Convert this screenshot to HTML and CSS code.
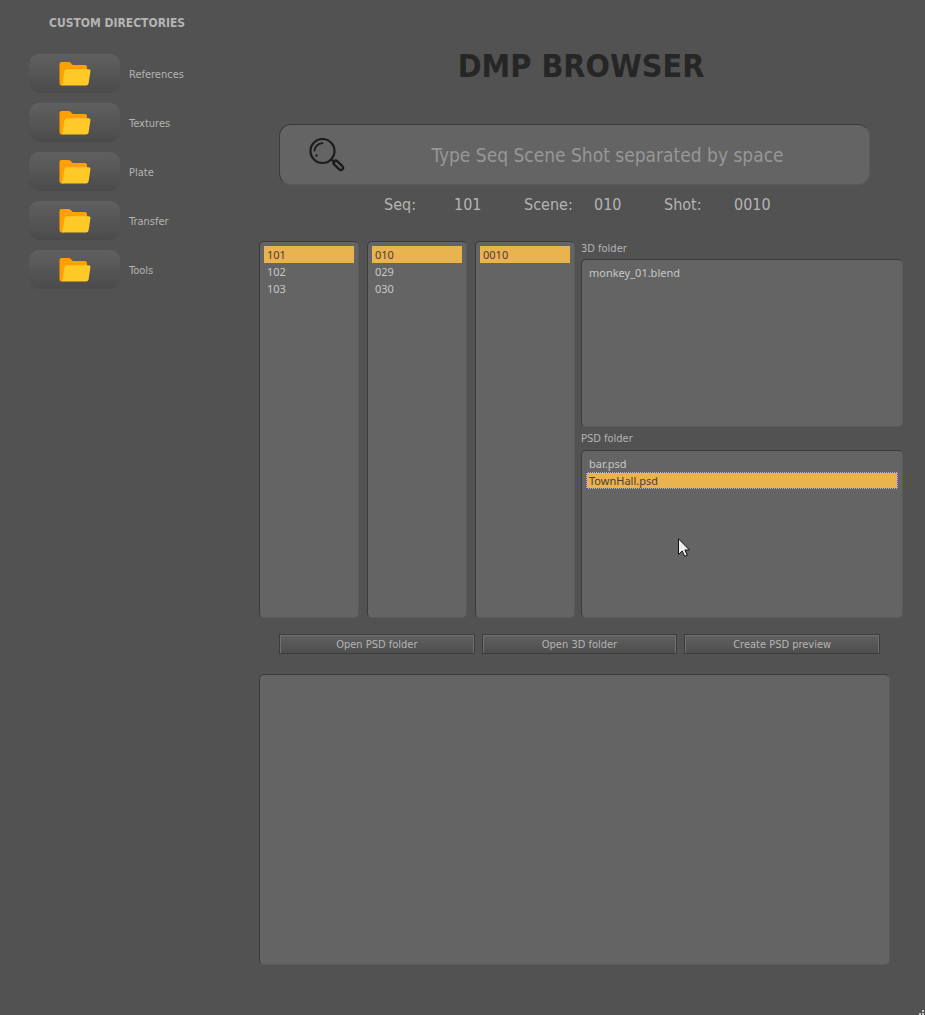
FILE: index.html
```html
<!DOCTYPE html>
<html lang="en">
<head>
<meta charset="utf-8">
<title>DMP Browser</title>
<link rel="stylesheet" href="styles.css">
</head>
<body>
<svg class="defs" aria-hidden="true">
  <symbol id="folder" viewBox="0 0 32 24">
    <path fill="#ffa000" d="M2.500 0H9.500Q11 0 12 1.200L13.800 3H26Q28 3 28 5V9L4 23.500H2.500Q0.500 23.500 0.500 21.500V2Q0.500 0 2.500 0Z"/>
    <path fill="#ffca28" d="M8 7.200H29.500Q31.800 7.200 31.400 9.500L29.600 21.500Q29.200 23.600 27 23.600H3.200L5.500 9.200Q6 7.200 8 7.200Z"/>
  </symbol>
</svg>
<div class="window">
  <aside class="sidebar">
    <h2 class="sidebar-title">CUSTOM DIRECTORIES</h2>
    <div class="directory"><button class="folder-button" id="d1" aria-labelledby="l1"><svg class="folder-icon"><use href="#folder"/></svg></button><label id="l1" for="d1">References</label></div>
    <div class="directory"><button class="folder-button" id="d2" aria-labelledby="l2"><svg class="folder-icon"><use href="#folder"/></svg></button><label id="l2" for="d2">Textures</label></div>
    <div class="directory"><button class="folder-button" id="d3" aria-labelledby="l3"><svg class="folder-icon"><use href="#folder"/></svg></button><label id="l3" for="d3">Plate</label></div>
    <div class="directory"><button class="folder-button" id="d4" aria-labelledby="l4"><svg class="folder-icon"><use href="#folder"/></svg></button><label id="l4" for="d4">Transfer</label></div>
    <div class="directory"><button class="folder-button" id="d5" aria-labelledby="l5"><svg class="folder-icon"><use href="#folder"/></svg></button><label id="l5" for="d5">Tools</label></div>
  </aside>
  <main class="main">
    <h1 class="title">DMP BROWSER</h1>
    <div class="search panel">
      <svg class="search-icon" viewBox="0 0 36 34" fill="none" stroke="#1c1c1c" stroke-linecap="round">
        <circle cx="13.500" cy="13" r="12" stroke-width="2.200"/>
        <path d="M5.500 12.500Q6.500 6 13.500 5.200" stroke-width="1.800"/>
        <circle cx="7.500" cy="17.500" r="1.200" fill="#1c1c1c" stroke="none"/>
        <path d="M22.500 21.500L25.500 24" stroke-width="2"/>
        <path d="M25.200 23.400Q26.800 21.800 28.500 23.400L33.400 28.200Q35 30 33.400 31.400Q31.800 32.800 30 31.200L25.200 26.500Q23.700 25 25.200 23.400Z" stroke-width="2.400"/>
      </svg>
      <input class="search-input" type="text" aria-label="Search shots" placeholder="Type Seq Scene Shot separated by space">
    </div>
    <div class="shot-info">
      <span>Seq:</span><span>101</span><span>Scene:</span><span>010</span><span>Shot:</span><span>0010</span>
    </div>
    <div class="browser">
      <ul class="list panel" aria-label="Sequences"><li class="selected">101</li><li>102</li><li>103</li></ul>
      <ul class="list panel" aria-label="Scenes"><li class="selected">010</li><li>029</li><li>030</li></ul>
      <ul class="list panel" aria-label="Shots"><li class="selected">0010</li></ul>
      <div class="files">
        <h3 class="files-title">3D folder</h3>
        <ul class="list panel"><li>monkey_01.blend</li></ul>
        <h3 class="files-title">PSD folder</h3>
        <ul class="list panel"><li>bar.psd</li><li class="selected focused">TownHall.psd</li></ul>
        <svg class="cursor" viewBox="0 0 12 19" aria-hidden="true"><path d="M.5 .8V16.500L4.200 13L6.700 18.300L9.300 17.200L6.900 12H11.500Z" fill="#eee" stroke="#111"/></svg>
      </div>
    </div>
    <div class="actions">
      <button class="action">Open PSD folder</button>
      <button class="action">Open 3D folder</button>
      <button class="action">Create PSD preview</button>
    </div>
    <section class="preview panel" aria-label="Preview"></section>
  </main>
  <svg class="grip" viewBox="0 0 5 5" aria-hidden="true"><path d="M3 0h2v2h-2zM0 3h2v2h-2zM3 3h2v2h-2z" fill="#c4c4c4"/></svg>
</div>
</body>
</html>
```
FILE: styles.css
```css
* { box-sizing: border-box; }
body {
  margin: 0;
  background: #525252;
  color: #b4b4b4;
  font: 11px/16px "DejaVu Sans Condensed", "DejaVu Sans", sans-serif;
}
h1, h2, h3, ul { margin: 0; padding: 0; }
button, input { font: inherit; color: inherit; }
.defs { position: absolute; width: 0; height: 0; }
.window {
  position: relative;
  display: grid;
  grid-template-columns: 230px 1fr;
  min-height: 100vh;
  padding: 14px 22px 50px 29px;
}
.sidebar { display: flex; flex-direction: column; gap: 10px; }
.sidebar-title { padding: 1px 0 0 20px; margin-bottom: 13px; font-size: 12px; line-height: 16px; }
.directory { display: flex; align-items: center; gap: 9px; }
.directory label { padding-top: 2px; }
.folder-button {
  display: grid;
  place-items: center;
  width: 91px;
  height: 39px;
  padding: 0;
  border: 0;
  border-radius: 10px;
  background: linear-gradient(#606060, #4b4b4b);
}
.folder-icon { width: 32px; height: 24px; }
.main { display: flex; flex-direction: column; }
.title {
  margin: 32px 0 38px;
  text-align: center;
  font-size: 32px;
  line-height: 40px;
  color: #262626;
}
.panel {
  background: #646464;
  border: 1px solid #3b3b3b;
  border-right-color: #5a5a5a;
  border-bottom-color: #5a5a5a;
  border-radius: 5px;
}
.search {
  display: flex;
  align-items: center;
  gap: 30px;
  height: 61px;
  margin: 0 33px 0 20px;
  padding: 0 29px;
  border-radius: 12px;
}
.search-icon { flex: none; width: 36px; height: 34px; }
.search-input {
  flex: 1;
  min-width: 0;
  padding: 0;
  border: 0;
  outline: 0;
  background: none;
  text-align: center;
  font-size: 19px;
  line-height: 28px;
}
.search-input::placeholder { color: #979797; opacity: 1; }
.shot-info {
  display: grid;
  grid-template-columns: repeat(5, 70px) 44px;
  justify-content: center;
  margin: 8px 0 24px;
  font-size: 16px;
  line-height: 24px;
}
.browser {
  display: grid;
  grid-template-columns: 100px 100px 100px 1fr;
  column-gap: 8px;
  height: 377px;
}
.list {
  list-style: none;
  padding: 4px;
  font-family: "Noto Sans", sans-serif;
  font-size: 11px;
  line-height: 17px;
  color: #c4c8c4;
}
.list li { padding-left: 3px; }
.list .selected { background: #e9b34f; color: #4a4038; }
.list .focused { outline: 1px dotted #2457c5; outline-offset: -1px; }
.files {
  position: relative;
  display: grid;
  grid-template-rows: 18px 1fr 23px 1fr;
  margin-left: -2px;
}
.files-title { font-size: 11px; font-weight: 400; line-height: 16px; }
.files-title ~ .files-title { padding-top: 4px; }
.cursor { position: absolute; left: 97px; top: 297px; width: 12px; height: 19px; }
.actions {
  display: grid;
  grid-template-columns: repeat(3, 1fr);
  gap: 7px;
  margin: 16px 23px 20px 20px;
}
.action {
  height: 20px;
  padding: 2px 0 0;
  border: 1px solid #3c3c3c;
  background: linear-gradient(#606060, #4e4e4e);
  box-shadow: inset 1px 1px #707070, inset -1px 0 #707070;
  line-height: 16px;
}
.preview { flex: 1; margin-right: 13px; }
.grip { position: absolute; right: 1px; bottom: 0; width: 5px; height: 5px; }
```
